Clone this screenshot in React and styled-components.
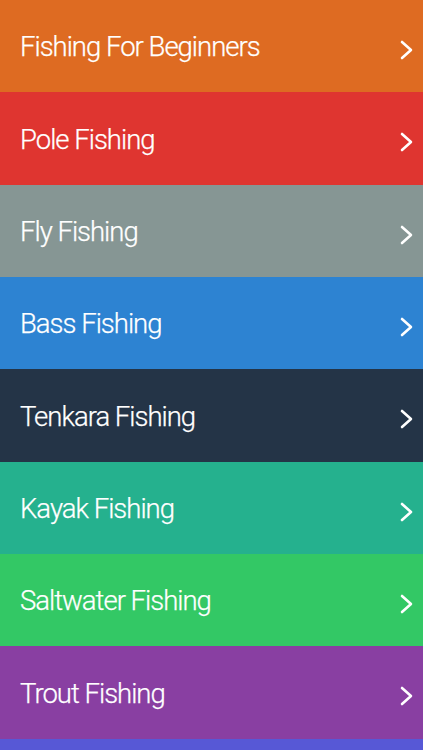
import React from 'react';
import styled, { createGlobalStyle } from 'styled-components';

const GlobalStyle = createGlobalStyle`
  html, body {
    margin: 0;
    padding: 0;
    background: #5758d6;
  }
  * { box-sizing: border-box; }
`;

const List = styled.ul`
  list-style: none;
  margin: 0;
  padding: 0;
`;

const Row = styled.li`
  display: flex;
  align-items: center;
  justify-content: space-between;
  height: 92.33px;
  padding: 0 10px 0 20px;
  background: ${p => p.color};
  color: #fff;
  cursor: pointer;
`;

const Title = styled.span`
  font-family: Roboto, "Open Sans", sans-serif;
  font-size: 27.5px;
  font-weight: 300;
  line-height: 1;
  letter-spacing: -1px;
  margin-top: 2px;
  -webkit-text-stroke: 0.25px #fff;
`;

const Chevron = styled.svg`
  width: 13px;
  height: 20px;
  margin-top: 8px;
  flex-shrink: 0;
`;

const items = [
  { title: 'Fishing For Beginners', color: '#de6b22' },
  { title: 'Pole Fishing', color: '#df3530' },
  { title: 'Fly Fishing', color: '#869694' },
  { title: 'Bass Fishing', color: '#2d83d2' },
  { title: 'Tenkara Fishing', color: '#243447' },
  { title: 'Kayak Fishing', color: '#25b18e' },
  { title: 'Saltwater Fishing', color: '#33c865' },
  { title: 'Trout Fishing', color: '#893fa2' },
];

const Arrow = () => (
  <Chevron viewBox="0 0 13 20">
    <polyline
      points="2,2 11,10 2,18"
      fill="none"
      stroke="#fff"
      strokeWidth="2.6"
      strokeLinecap="round"
      strokeLinejoin="round"
    />
  </Chevron>
);

const App = () => (
  <>
    <GlobalStyle />
    <List>
      {items.map(item => (
        <Row key={item.title} color={item.color}>
          <Title>{item.title}</Title>
          <Arrow />
        </Row>
      ))}
    </List>
  </>
);

export default App;
